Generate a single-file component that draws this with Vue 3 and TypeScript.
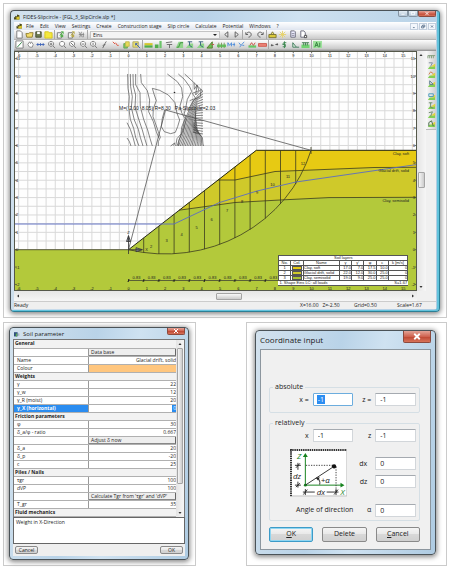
<script setup lang="ts">
interface Shape { d: string; f?: string; s?: string }
type Icon = Shape[]

const G = '#4fae4a'
const page: Icon = [{ d: 'M2 1H6L8 3V9H2Z', f: '#fff', s: '#777' }]
const folder: Icon = [{ d: 'M1 4H4L5 3H9L8 8H2Z', f: '#f3dc6a', s: '#8d7b2c' }]
const disk: Icon = [{ d: 'M2 2H8V8H2Z', f: '#6d7a50', s: '#454c30' }, { d: 'M3.5 2H6.5V4.5H3.5Z', f: '#fff' }]
const folderLit: Icon = [{ d: 'M1 2H5L6 3H9V9H1Z', f: '#f4e83e', s: '#d6c51c' }]
const sheetOut = (c: string): Icon => [{ d: 'M1.5 3H6V9H1.5Z', f: '#f4f4f4', s: '#777' }, { d: 'M4 6L8 2M8 4.500V2H5.500', s: c }, { d: 'M5 5H8V8H5Z', f: c }]
const scissors: Icon = [{ d: 'M2 2L6 8M5 2L3 8M7 3V8M2 5H8', s: '#888' }]
const prev: Icon = [{ d: 'M6.500 2V8L3 5Z', f: '#eee', s: '#555' }]
const next: Icon = [{ d: 'M3.500 2V8L7 5Z', f: '#eee', s: '#555' }]
const undo: Icon = [{ d: 'M3 4C4 1.500 8 2 8 5C8 7 6 8 5 8M2 2.500V5H4.500', s: '#555' }]
const redo: Icon = [{ d: 'M7 4C6 1.500 2 2 2 5C2 7 4 8 5 8M8 2.500V5H5.500', s: '#555' }]
const print: Icon = [{ d: 'M1 5H9V8.500H1Z', f: '#d9c93c', s: '#7a7332' }, { d: 'M3 5L5 2L7 5Z', f: '#ece37a', s: '#7a7332' }]
const spark: Icon = [{ d: 'M5 1V9M1 5H9M2 2L8 8M8 2L2 8', s: '#e6d36a' }]
const copy: Icon = [{ d: 'M2 1H6L7 2V8H2Z', f: '#eef', s: '#667' }, { d: 'M3 4H6M3 6H6', s: '#889' }]
const preview: Icon = [{ d: 'M2 1H5.500L7 3V8H2Z', f: '#fff', s: '#667' }, { d: 'M6 6H8.500V8.500H6Z', f: '#fff', s: '#444' }]

const pen: Icon = [{ d: 'M1 1H9V9H1Z', f: '#fff', s: '#777' }, { d: 'M2.500 8L7.500 2.500', s: '#1f7a36' }]
const hand: Icon = [{ d: 'M2 5L4 2L5 4L6 2L8 5L7 8H4Z', f: '#fff', s: '#888' }]
const scale: Icon = [{ d: 'M0.500 5H9.500M2 3.500V6.500M5 3.500V6.500M8 3.500V6.500', s: '#3c62b8' }]
const lens = (inner: string): Icon => [{ d: 'M4.500 1.500A2.800 2.800 0 1 0 4.510 1.500M6.500 6.500L9 9', f: '#fff', s: '#777' }, { d: inner, s: '#666' }]
const slash: Icon = [{ d: 'M3 9L5.500 4L7 1.500M3 6L6 5', s: '#666' }]
const redArrow: Icon = [{ d: 'M2 2L4.500 4.500M5 3L7 6H8.500', s: '#dd4b34' }]
const layer: Icon = [{ d: 'M2 4H6V9H2Z', f: '#79c35e', s: '#6aa655' }, { d: 'M4 2H8V7H4Z', f: '#e9dd58', s: '#c2b84e' }]
const shot: Icon = [{ d: 'M1 2H7V8H1Z', f: '#e8de70', s: '#b0a860' }, { d: 'M4 4L9 9M6 4H4V6', s: '#3b5fb5' }]
const strata: Icon = [{ d: 'M0.500 3.500H9.500V6H0.500Z', f: '#d2c62a' }, { d: 'M0.500 6H9.500V8.500H0.500Z', f: G }]
const wall: Icon = [{ d: 'M1 5H5V9H1Z', f: G }, { d: 'M6 1H8.500V9H6Z', f: '#6cc46a' }]
const nails: Icon = [{ d: 'M1 3L8 2M2 5H8M5 5V9', s: '#666' }]
const slopeUp: Icon = [{ d: 'M1 9L4 2H9V9Z', f: '#8fd58a' }, { d: 'M2 8H4L6 3H9', s: '#3d8f3a' }]
const slopeMan: Icon = [{ d: 'M1 9L5 4H9V9Z', f: '#8fd58a' }, { d: 'M3 2H8M5 2V6L8 8', s: '#315f7b' }]
const wedge: Icon = [{ d: 'M1 9L7 2V9Z', f: '#6bbf52', s: '#567b2e' }, { d: 'M6 5H9', s: '#b54' }]
const hatch: Icon = [{ d: 'M0 5H10V8H0Z', f: '#5dca5f' }, { d: 'M2 3V9M5 3V9M8 3V9', s: '#7c9b5a' }]
const blueM: Icon = [{ d: 'M1 7V3L3 6L5 3V7M6 5H9M8 3V7', s: '#4e8ddb' }]
const blueY: Icon = [{ d: 'M2 3L4.500 6L8 2M4.500 6L3 8M6 6H8', s: '#4e8ddb' }]
const redUp: Icon = [{ d: 'M0.500 6H9V8.500H0.500Z', f: '#67c766' }, { d: 'M2 6L4 3L6 6L8 3', s: '#c84a3c' }]
const redBar: Icon = [{ d: 'M0.500 4H9.500V7H0.500Z', f: '#ee8578', s: '#cc5548' }]
const link: Icon = [{ d: 'M1 6H4M6 5H9M2 4.500V7M8 3.500V6', s: '#555' }]
const dollar: Icon = [{ d: 'M7 3H4L3 5H6L6 7.500H3M5 1.500V9', s: '#3c8850' }]
const tri: Icon = [{ d: 'M2 8V3L6 8ZM6 8H9', s: '#3c7858', f: '#dff2e2' }]
const load: Icon = [{ d: 'M0.500 5H9.500V9H0.500Z', f: '#71d372' }, { d: 'M1 3H9M3 3V6M5 3V6M7 3V6', s: '#3f7d4d' }]
const ai: Icon = [{ d: 'M0 1H10V9H0Z', f: '#9ee29d' }, { d: 'M2 8L4 2.500L6 8M3 6H5M7.500 3V8', s: '#2c7a35' }]

const fileTools: { name: string; icon: Icon }[][] = [
  [{ name: 'New', icon: page }, { name: 'Open', icon: folder }, { name: 'Save', icon: disk }, { name: 'Project', icon: folderLit }],
  [{ name: 'Import', icon: sheetOut('#55b04c') }, { name: 'Export', icon: sheetOut('#b9a94a') }, { name: 'Cut', icon: scissors }],
]
const editTools: { name: string; icon: Icon }[][] = [
  [{ name: 'Previous', icon: prev }, { name: 'Next', icon: next }],
  [{ name: 'Undo', icon: undo }, { name: 'Redo', icon: redo }],
  [{ name: 'Print', icon: print }, { name: 'Calculate', icon: spark }, { name: 'Copy', icon: copy }, { name: 'Preview', icon: preview }],
]
const drawTools: Icon[][] = [
  [pen, hand, scale, lens('M3 4.500H6M4.500 3V6'), lens(''), lens('M3 3L6 6'), lens('M3 4.500H6'), lens('M4.500 3V6'), slash],
  [redArrow, layer, shot],
  [strata, wall, nails, slopeUp, slopeMan, slopeMan, wedge, hatch, blueM, blueY, redUp, redBar],
  [link, dollar, tri, load],
  [ai],
]
const sideCap: Icon = [{ d: 'M1 4V7M3 4V7M5 4V7M7 4V7M1 4H9', s: '#7f9a76' }]
const side = (mark: string, c: string): Icon => [
  { d: 'M1 9L3 6H7L9 4V9Z', f: '#83cf55' },
  { d: 'M4 6L9 3V6Z', f: '#e4d23c' },
  { d: mark, s: c },
]
const sideTools: Icon[] = [
  sideCap, side('M2 2H6L4 6', '#789'), side('M2 5L4 2L7 4', '#c74'), side('M3 2V6H7Z', '#578'),
  side('M2 2H7V5H2Z', '#49b'), side('M2 2H6M4 2V7L7 8', '#686'), side('M2 3L6 2L4 7', '#686'), side('M2 8V4L5 2L7 8', '#464'),
]
const menus = ['File', 'Edit', 'View', 'Settings', 'Create', 'Construction stage', 'Slip circle', 'Calculate', 'Potential', 'Windows', '?']

/* metres to drawing units */
const px = (x: number) => 129.5 + x * 18.31
const py = (z: number) => 249.7 - z * 17.37
const range = (a: number, b: number, step = 1) =>
  Array.from({ length: Math.round((b - a) / step) + 1 }, (_, i) => a + i * step)
const gridX = range(-6, 15.5, 0.5)
const gridZ = range(0, 11, 0.5)
const labelsX = range(-6, 15)
const labelsZ = range(-2, 11)
const arcY = (x: number) => 110 + 144 * Math.sqrt(1 - ((x - 166.5) / 151.9) ** 2)
const groundY = (x: number) => Math.max(150.3, 249.7 - (x - 129.5) * 0.778)
const slices = range(1, 11).map((i) => 129.5 + i * 15.2)
const ticks = range(0, 9).map((i) => 129.5 + i * 15.2)
const sliceLabels: [number, number, number][] = [
  [2, 152, 246], [3, 167.5, 240], [4, 182.5, 234], [5, 197.500, 227], [6, 212.500, 219], [7, 228, 210],
  [8, 243, 201], [9, 258, 192], [10, 273.500, 184], [11, 289, 176], [12, 304, 163],
]
const dense = range(0, 16).map((i) =>
  `M612 ${124 + i * 8}L${598 - i} ${134 + i * 7}L${582 + i} ${156 + i * 6}L${568 + i * 2} ${186 + i * 4}L${556 + i * 3.4} ${215 + i * 3}L${548 + i * 4} ${250 + i * 2}L${534 + i * 5} 288`)
const contours = [
  'M386 72L387 115L391 140L389 170L394 208L404 235L410 262L420 288',
  'M394 72L395 110L400 140L397 172L406 210L418 238L424 262L432 288',
  'M402 72L403 108L410 135L408 172L420 210L430 240L437 265L444 288',
  'M410 72L410 104L423 128L424 170L434 208L446 240L453 265L460 288',
  'M425 72L427 98L445 122L452 150L449 185L463 215L472 245L480 265',
  'M384 218L394 238L402 262L409 288',
  'M384 264L391 274L396 288',
  'M460 115L466 135L472 152L463 175L462 200L470 222L478 245L484 262L478 275L478 288',
  'M460 115L482 121L508 135L528 158L534 190L542 210L536 230L529 247L515 251L496 245L487 230L490 205L497 180',
  'M505 72L535 95L548 114L551 140L543 168L548 188L558 206L548 232L546 252L534 266L530 288',
  'M538 72L556 88L572 110L578 124L565 148L560 175L556 190L562 208L553 240L540 270L538 288',
  'M557 72L585 98L612 124',
  'M585 98L586 118L594 105L600 122L580 130L590 145L572 152',
  'M594 106L590 135L606 118L604 140L584 150L566 182',
  'M515 288L527 279L524 287',
  ...dense,
]

const layers = [
  { no: 1, col: 'soft', name: 'Clay, soft', v: ['17.0', '7.0', '17.5', '10.0', '0'] },
  { no: 2, col: 'drift', name: 'Glacial drift, solid', v: ['22.0', '12.0', '30.0', '25.0', '0'] },
  { no: 3, col: 'semi', name: 'Clay, semisolid', v: ['19.0', '9.0', '25.0', '25.0', '0'] },
]

interface Row { kind: 'head' | 'button' | 'value' | 'colour'; label?: string; value?: string; active?: boolean }
const rows: Row[] = [
  { kind: 'head', label: 'General' },
  { kind: 'button', value: 'Data base' },
  { kind: 'value', label: 'Name', value: 'Glacial drift, solid' },
  { kind: 'colour', label: 'Colour' },
  { kind: 'head', label: 'Weights' },
  { kind: 'value', label: 'γ', value: '22' },
  { kind: 'value', label: 'γ_w', value: '12' },
  { kind: 'value', label: 'γ_R (moist)', value: '20' },
  { kind: 'value', label: 'γ_X (horizontal)', value: '0', active: true },
  { kind: 'head', label: 'Friction parameters' },
  { kind: 'value', label: 'φ', value: '30' },
  { kind: 'value', label: 'δ_a/φ - ratio', value: '0.667' },
  { kind: 'button', value: 'Adjust δ now' },
  { kind: 'value', label: 'δ_a', value: '20' },
  { kind: 'value', label: 'δ_p', value: '-20' },
  { kind: 'value', label: 'c', value: '25' },
  { kind: 'head', label: 'Piles / Nails' },
  { kind: 'value', label: 'τgr', value: '100' },
  { kind: 'value', label: 'dVP', value: '100' },
  { kind: 'button', value: "Calculate Tgr from 'τgr' and 'dVP'" },
  { kind: 'value', label: 'T_gr', value: '35' },
  { kind: 'head', label: 'Fluid mechanics' },
]
</script>

<template>
  <main class="sheet">
    <section class="card">
      <div class="win app">
        <header class="title">
          <svg class="logo" viewBox="0 0 10 10"><path d="M0 9V5L2 6V3L5 4V1L9 2V9Z" fill="#4b4a1c" /><path d="M4 9V5L9 4V9Z" fill="#d8c52a" /></svg>
          <h1>FIDES-Slipcircle - [FGL_3_SlipCircle.slp *]</h1>
          <div class="caption">
            <button class="cap" aria-label="Minimize"><svg viewBox="0 0 10 6"><path d="M3 4H7" /></svg></button>
            <button class="cap" aria-label="Maximize"><svg viewBox="0 0 10 6"><path d="M3 1.500H7V4.500H3Z" /></svg></button>
            <button class="cap shut" aria-label="Close"><svg viewBox="0 0 10 6"><path d="M3 1L7 5M7 1L3 5" /></svg></button>
          </div>
        </header>
        <nav class="menu">
          <svg class="logo" viewBox="0 0 10 10"><path d="M0 9V5L2 6V3L5 4V1L9 2V9Z" fill="#4b4a1c" /><path d="M3 9V6L9 4V9Z" fill="#d8c52a" /></svg>
          <a v-for="m in menus" :key="m" href="#">{{ m }}</a>
          <div class="mdi">
            <button aria-label="Minimize document"><svg viewBox="0 0 8 7"><path d="M2.500 5H5" /></svg></button>
            <button aria-label="Restore document"><svg viewBox="0 0 8 7"><path d="M2 3H5V5.500H2ZM3.500 3V1.500H6.500V4H5" /></svg></button>
            <button aria-label="Close document"><svg viewBox="0 0 8 7"><path d="M2.500 2L5.500 5M5.500 2L2.500 5" /></svg></button>
          </div>
        </nav>
        <div class="bar files">
          <div v-for="(g, i) in fileTools" :key="i" class="group">
            <button v-for="t in g" :key="t.name" class="tool" :aria-label="t.name">
              <svg viewBox="0 0 10 10"><path v-for="(p, k) in t.icon" :key="k" :d="p.d" :fill="p.f ?? 'none'" :stroke="p.s ?? 'none'" /></svg>
            </button>
          </div>
          <div class="stage">
            <select aria-label="Construction stage"><option>Eins</option></select>
          </div>
          <div v-for="(g, i) in editTools" :key="'e' + i" class="group">
            <button v-for="t in g" :key="t.name" class="tool" :aria-label="t.name">
              <svg viewBox="0 0 10 10"><path v-for="(p, k) in t.icon" :key="k" :d="p.d" :fill="p.f ?? 'none'" :stroke="p.s ?? 'none'" /></svg>
            </button>
          </div>
        </div>
        <div class="bar draws">
          <div v-for="(g, i) in drawTools" :key="i" class="group">
            <button v-for="(icon, j) in g" :key="j" class="tool" :aria-label="`Drawing tool ${i + 1}.${j + 1}`">
              <svg viewBox="0 0 10 10"><path v-for="(p, k) in icon" :key="k" :d="p.d" :fill="p.f ?? 'none'" :stroke="p.s ?? 'none'" /></svg>
            </button>
          </div>
        </div>
        <div class="work">
          <div class="chart">
            <svg class="plot" viewBox="15 51 403 240">
              <rect x="15" y="51" width="403" height="240" fill="#fefefe" />
              <g stroke="#d9d9d9" stroke-width="1">
                <line v-for="x in gridX" :key="'x' + x" :x1="px(x)" :x2="px(x)" y1="51" y2="250" />
                <line v-for="z in gridZ" :key="'z' + z" x1="16" x2="417" :y1="py(z)" :y2="py(z)" />
              </g>
              <path d="M15 249.700H129.500L257.300 150.300H418V291H15Z" fill="#b3c93b" />
              <path d="M180 210.200L219 180L257.300 150.300H418V197.300L330 197.600L281 200L236 202.500Z" fill="#cfc92a" />
              <path d="M219 180L257.300 150.300H418V167.300L375 167.500L276 171.500L236 180Z" fill="#e7ca13" />
              <g fill="none" stroke="#3b3b20" stroke-width="0.800">
                <path d="M15 249.700H129.500" />
                <path d="M129.500 249.700L257.300 150.300H418" stroke="#26261a" stroke-width="1" />
                <path d="M219 180H236L276 171.500L375 167.500L418 167.300" />
                <path d="M180 210.200L236 202.500L281 200L330 197.600L418 197.300" />
                <path d="M129.500 249.700A151.900 144 0 0 0 312 150.300" />
                <path d="M312 147V154" />
                <line v-for="x in slices" :key="x" :x1="x" :x2="x" :y1="groundY(x)" :y2="arcY(x)" />
              </g>
              <path d="M15 224H175L220 202.700L258 191L297 182L418 164.500" fill="none" stroke="#5a6cc4" stroke-width="0.900" />
              <path d="M129.500 249.700L166.500 110L312 150.300" fill="none" stroke="#555" stroke-width="0.800" />
              <g transform="translate(0 50) scale(0.3333)" fill="none" stroke="#4a4a4a" stroke-width="2">
                <path v-for="(c, i) in contours" :key="i" :d="c" />
              </g>
              <circle cx="175.500" cy="92.500" r="0.800" fill="#222" />
              <g stroke="#333" stroke-width="0.800" fill="#8a8f9c">
                <path d="M129.500 254V236M127.500 241.500L129.500 235.500L131.500 241.500Z" />
                <path d="M129.500 249.700H143M137 247.700L143.500 249.700L137 251.700Z" />
              </g>
              <g class="ink mid">
                <text x="129.500" y="233.500">Z</text>
                <text x="147.500" y="251">X</text>
                <text v-for="[n, x, y] in sliceLabels" :key="n" :x="x" :y="y + 1.500">{{ n }}</text>
                <text v-for="x in labelsX" :key="'t' + x" :x="px(x)" y="57">{{ x }}</text>
                <text v-for="x in labelsX" :key="'b' + x" :x="px(x)" y="289.500">{{ x }}</text>
                <text v-for="t in ticks" :key="'d' + t" :x="t + 8" y="279">0.83</text>
              </g>
              <g class="ink">
                <text v-for="z in labelsZ" :key="'l' + z" x="17" :y="py(z) + 1.500">{{ z }}</text>
                <text class="wide" x="120" y="109.500">M=( 2.00&#160; 8.05) R=8.30&#160;&#160; Pa-Slipcircle=2.03</text>
              </g>
              <g class="ink end">
                <text v-for="z in labelsZ" :key="'r' + z" x="416" :y="py(z) + 1.500">{{ z }}</text>
                <text x="410" y="154.500">Clay, soft</text>
                <text x="410" y="171.500">Glacial drift, solid</text>
                <text x="410" y="202">Clay, semisolid</text>
              </g>
              <path d="M129.500 280.500H280" stroke="#333" stroke-width="0.700" />
              <path v-for="t in ticks" :key="t" :d="`M${t - 1} 281.500L${t + 1} 279.500M${t} 279V282`" stroke="#222" stroke-width="0.800" />
              <g stroke="#444" stroke-width="0.700">
                <line v-for="x in labelsX" :key="'k' + x" :x1="px(x)" :x2="px(x)" y1="51" y2="53" />
                <line v-for="x in labelsX" :key="'m' + x" :x1="px(x)" :x2="px(x)" y1="289.500" y2="291" />
                <line v-for="z in labelsZ" :key="'n' + z" x1="15" x2="18" :y1="py(z)" :y2="py(z)" />
                <line v-for="z in labelsZ" :key="'o' + z" x1="415.500" x2="418" :y1="py(z)" :y2="py(z)" />
              </g>
              <rect x="15.500" y="51.500" width="402" height="239" fill="none" stroke="#55584a" />
            </svg>
            <table class="legend">
              <colgroup>
                <col class="c-no"><col class="c-col"><col class="c-name"><col class="c-n"><col class="c-n"><col class="c-n"><col class="c-n"><col class="c-k">
              </colgroup>
              <thead>
                <tr><th colspan="8">Soil layers</th></tr>
                <tr><th>No.</th><th>Col.</th><th>Name</th><th>γ</th><th>γ'</th><th>φ</th><th>c</th><th>k [m/s]</th></tr>
              </thead>
              <tbody>
                <tr v-for="l in layers" :key="l.no">
                  <td class="ctr">{{ l.no }}</td>
                  <td><span class="chip" :class="l.col"></span></td>
                  <td>{{ l.name }}</td>
                  <td v-for="(v, i) in l.v" :key="i" class="num">{{ v }}</td>
                </tr>
              </tbody>
              <tfoot>
                <tr><td class="note" colspan="5">1. Shape Eins LC: all loads</td><td class="note num" colspan="3">S=1.67</td></tr>
              </tfoot>
            </table>
          </div>
          <div class="vscroll">
            <button aria-label="Scroll up"><svg viewBox="0 0 8 8"><path d="M2.500 5L4 3L5.500 5Z" /></svg></button>
            <i class="above"></i><i class="thumb"></i><i class="below"></i>
            <button aria-label="Scroll down"><svg viewBox="0 0 8 8"><path d="M2.500 3L4 5L5.500 3Z" /></svg></button>
          </div>
          <aside class="side">
            <button v-for="(icon, i) in sideTools" :key="i" class="tool" :aria-label="`View ${i + 1}`">
              <svg viewBox="0 0 10 10"><path v-for="(p, k) in icon" :key="k" :d="p.d" :fill="p.f ?? 'none'" :stroke="p.s ?? 'none'" /></svg>
            </button>
          </aside>
          <div class="hscroll">
            <button aria-label="Scroll left"><svg viewBox="0 0 8 8"><path d="M5 2.500L3 4L5 5.500Z" /></svg></button>
            <i class="before"></i><i class="thumb"></i><i class="after"></i>
            <button aria-label="Scroll right"><svg viewBox="0 0 8 8"><path d="M3 2.500L5 4L3 5.500Z" /></svg></button>
          </div>
        </div>
        <footer class="status">
          <span class="ready">Ready</span>
          <span class="pos">X=16.00&#160;&#160; Z=-2.50</span>
          <span class="grid">Grid=0.50</span>
          <span class="scl">Scale=1.67</span>
        </footer>
      </div>
    </section>

    <section class="card">
      <form class="win soil" @submit.prevent>
        <header class="title">
          <svg class="logo" viewBox="0 0 10 10"><path d="M0 2H6V9H0Z" fill="#2f4f7c" /><path d="M3 4H5V9H3Z" fill="#5cb04d" /><path d="M8 4V8" stroke="#777" /></svg>
          <h2>Soil parameter</h2>
          <button type="button" class="cap shut" aria-label="Close"><svg viewBox="0 0 10 6"><path d="M3 1L7 5M7 1L3 5" /></svg></button>
        </header>
        <div class="props">
          <table class="grid-table">
            <tbody>
              <tr v-for="(r, i) in rows" :key="i" :class="[r.kind, { active: r.active }]">
                <th v-if="r.kind === 'head'" colspan="2">{{ r.label }}</th>
                <template v-else>
                  <th class="lab"><label v-if="r.label" :for="`p${i}`">{{ r.label }}</label></th>
                  <td>
                    <button v-if="r.kind === 'button'" type="button" class="flat">{{ r.value }}</button>
                    <button v-else-if="r.kind === 'colour'" :id="`p${i}`" type="button" class="swatch"></button>
                    <input v-else :id="`p${i}`" type="text" :value="r.value">
                  </td>
                </template>
              </tr>
            </tbody>
          </table>
          <div class="vscroll slim">
            <button type="button" aria-label="Scroll up"><svg viewBox="0 0 8 8"><path d="M2.500 5L4 3L5.500 5Z" /></svg></button>
            <i class="thumb"></i><i class="below"></i>
            <button type="button" aria-label="Scroll down"><svg viewBox="0 0 8 8"><path d="M2.500 3L4 5L5.500 3Z" /></svg></button>
          </div>
        </div>
        <p class="hint">Weight in X-Direction</p>
        <div class="actions">
          <button type="button" class="push">Cancel</button>
          <button type="submit" class="push">OK</button>
        </div>
      </form>
    </section>

    <section class="card">
      <form class="win coord" @submit.prevent>
        <header class="title">
          <h2>Coordinate input</h2>
          <button type="button" class="cap shut" aria-label="Close"><svg viewBox="0 0 10 6"><path d="M3.500 1.500L6.500 4.500M6.500 1.500L3.500 4.500" /></svg></button>
        </header>
        <div class="pane">
          <fieldset>
            <legend>absolute</legend>
            <div class="fields">
              <label for="ax">x =</label><input id="ax" class="picked" type="text" value="-1">
              <label for="az">z =</label><input id="az" type="text" value="-1">
            </div>
          </fieldset>
          <fieldset>
            <legend>relatively</legend>
            <div class="fields rel">
              <label for="rx">x</label><input id="rx" type="text" value="-1">
              <label for="rz">z</label><input id="rz" type="text" value="-1">
              <div class="sketch">
                <svg viewBox="0 0 58 48">
                  <rect width="58" height="48" fill="#fff" />
                  <path d="M0 1H58M1 0V48" fill="none" stroke="#333" stroke-width="2" stroke-dasharray="1.500 0.700" />
                  <path d="M57.500 2V47.500H2" fill="none" stroke="#bbb" />
                  <g stroke="#17831f" fill="#17831f">
                    <path d="M15.500 37V7M15.500 36.500H52" fill="none" />
                    <path d="M13 8L15.500 4L18 8ZM51 34L55 36.500L51 39Z" stroke="none" />
                    <circle cx="15.500" cy="36.500" r="1.500" stroke="none" />
                  </g>
                  <path d="M16 16.500H45M46.500 18V43" fill="none" stroke="#444" stroke-dasharray="1.300 1.300" />
                  <path d="M15.500 36.500L43 18.500M27.500 29C30 31 30.500 33 30 36" fill="none" stroke="#222" stroke-width="0.900" />
                  <path d="M26 29L30 28.500L28.500 32Z" fill="#222" />
                  <circle cx="44.500" cy="17.500" r="2.200" fill="#111" />
                  <g fill="none" stroke="#222" stroke-width="0.900">
                    <path d="M8 14V21M8 33V39M5 16.500H11M6 19L10 14.500M5 36.500H11M6 38.500L10 34.500" />
                    <path d="M13 43.500H25M37 43.500H49M15.500 40.500V46.500M13.500 46L17.500 41M46.500 40.500V46.500M44.500 46L48.500 41" />
                  </g>
                  <g class="hand">
                    <text x="7" y="10" class="green">Z</text>
                    <text x="3" y="30">dz</text>
                    <text x="31" y="34">+α</text>
                    <text x="27" y="46">dx</text>
                    <text x="51" y="46" class="green">X</text>
                  </g>
                </svg>
              </div>
              <div class="deltas">
                <label for="dx">dx</label><input id="dx" type="text" value="0">
                <label for="dz">dz</label><input id="dz" type="text" value="0">
              </div>
              <label class="angle" for="al">Angle of direction</label>
              <label for="al">α</label><input id="al" type="text" value="0">
            </div>
          </fieldset>
          <div class="buttons">
            <button type="submit" class="push main"><u>O</u>K</button>
            <button type="button" class="push">Delete</button>
            <button type="button" class="push"><u>C</u>ancel</button>
          </div>
        </div>
      </form>
    </section>
  </main>
</template>

<style>
body { background: #fff; }
</style>

<style scoped>
* { box-sizing: border-box; }
.sheet {
  display: grid;
  grid-template-columns: 193fr 201fr;
  column-gap: 50px;
  row-gap: 4px;
  padding: 3px 4px 3px 3px;
  font-family: "Open Sans", "Noto Sans", sans-serif;
  font-size: 5px;
  line-height: 8px;
  color: #222;
}
.card { border: 1px solid #cbcbcb; background: #fff; }
.card:first-child { grid-column: 1 / -1; padding: 6px 6px 5px; }
.card:nth-child(2) { padding: 4px 6px 5px 5px; }
.card:nth-child(3) { padding: 7px 10px 10px 8px; }
h1, h2, p { margin: 0; font-size: inherit; font-weight: 400; }
button, input, select { font: inherit; color: inherit; margin: 0; padding: 0; border: 0; background: none; }
svg { display: block; }
a { color: inherit; text-decoration: none; }

.win {
  border: 1px solid #4b5358;
  border-radius: 4px;
  background: linear-gradient(100deg, #d3e2ee, #b9d3e8 40%, #cfe2f1 60%, #aecbe2);
  box-shadow: 0 1px 5px 1px #888;
  padding: 0 3px 3px;
}
.app { padding-bottom: 2px; border-right-color: #2c7f96; border-bottom-color: #2c7f96; box-shadow: inset -2px -1px 0 #62c3dc, 0 1px 5px 1px #888; }
.title { display: flex; align-items: center; height: 11px; gap: 3px; }
.logo { width: 6px; height: 6px; }
.title h1, .title h2 { flex: 1; }
.caption { display: flex; align-self: flex-start; }
.cap { width: 10px; height: 6px; border: 1px solid #8594a2; border-top: 0; border-radius: 0 0 2px 2px; background: linear-gradient(#e4edf5, #b4c6d6); }
.cap svg { width: 100%; height: 100%; }
.cap path { fill: none; stroke: #fff; stroke-width: 1; }
.cap.shut { width: 18px; border-color: #8c4a3e; background: linear-gradient(#e3a396, #cf6350 50%, #bd4632 52%, #d7735a); }

.menu { display: flex; align-items: center; gap: 6px; height: 8px; padding: 0 0 0 2px; background: linear-gradient(#fff, #dfe5ef); }
.menu .logo { width: 7px; margin-right: -3px; }
.mdi { display: flex; margin-left: auto; gap: 1px; }
.mdi button { width: 8px; height: 7px; border: 1px solid #c3cfdd; background: #f3f7fc; }
.mdi svg { width: 100%; height: 100%; }
.mdi path { fill: none; stroke: #46607e; stroke-width: 1; }
.bar { height: 10px; background: linear-gradient(#fdfdfd, #c9c9c9); border-bottom: 1px solid #b5b5b5; align-items: center; }
.group { display: flex; justify-content: space-between; padding: 0 1px; border-right: 1px solid #a8a8a8; }
.group:last-child { border-right: 0; }
.tool { width: 9px; height: 9px; }
.tool svg { width: 100%; height: 100%; }
.files { display: grid; grid-template-columns: 41px 33px 133px 22px 24px 42px; }
.draws { display: grid; grid-template-columns: 96px 33px 126px 43px 14px; }
.draws .group:first-child { border-right: 0; }
.stage { position: relative; margin: 0 1px 0 2px; height: 8px; }
.stage select { display: block; appearance: none; width: 100%; height: 8px; padding-left: 2px; background: #f4f4f4; border: 1px solid #c4c4c4; border-radius: 0; line-height: 6px; }
.stage::after { content: ""; position: absolute; right: 3px; top: 3px; border: 2px solid transparent; border-top-color: #222; border-bottom: 0; }

.work { display: grid; grid-template-columns: 1fr 9px 10px; background: #f0f0f0; border-top: 1px solid #999; }
.chart { position: relative; }
.plot { width: 100%; height: auto; }
.ink { font: 4px "Liberation Sans", Arial, sans-serif; fill: #222; }
.ink .wide { font-size: 5px; }
.mid { text-anchor: middle; }
.end { text-anchor: end; }
.legend {
  position: absolute;
  right: 2.2%;
  bottom: 2%;
  width: 32.2%;
  table-layout: fixed;
  border-collapse: collapse;
  background: #fff;
  font: 4px/4px "Liberation Sans", Arial, sans-serif;
  color: #222;
}
.legend th, .legend td { height: 5px; padding: 0; border: 1px solid #555; font-weight: 400; white-space: nowrap; text-align: left; }
.legend th, .legend .ctr { text-align: center; }
.legend .num { text-align: right; }
.legend .note { border-left-color: transparent; border-right-color: transparent; }
.c-no { width: 9%; }
.c-col { width: 10%; }
.c-name { width: 28%; }
.c-n { width: 9.5%; }
.c-k { width: 15%; }
.chip { display: block; height: 4px; margin: 0 1px; border: 1px solid #555; }
.soft { background: #e7ca13; }
.drift { background: #cfc92a; }
.semi { background: #a9c032; }

.vscroll { display: flex; flex-direction: column; background: linear-gradient(90deg, #e4e4e4, #f6f6f6); }
.vscroll button, .hscroll button { width: 8px; height: 8px; flex: none; }
.vscroll svg, .hscroll svg { width: 100%; height: 100%; }
.vscroll path, .hscroll path { fill: #333; }
.vscroll .thumb { height: 16px; margin: 0 1px; border: 1px solid #a5a5a5; border-radius: 1px; background: linear-gradient(90deg, #f6f6f6, #ccc); }
.above { flex: 113; }
.below { flex: 95; }
.slim .thumb { flex: 136; }
.slim .below { flex: 25; }
.side { align-self: start; display: grid; justify-items: center; background: linear-gradient(90deg, #fafafa, #cfcfcf); padding: 1px 0; border-bottom: 1px solid #bbb; }
.side .tool:nth-child(4) { margin-bottom: 4px; }
.hscroll { grid-column: 1 / 2; display: flex; align-items: center; height: 10px; background: linear-gradient(#e6e6e6, #f6f6f6); }
.hscroll .thumb { width: 26px; height: 7px; border: 1px solid #a5a5a5; border-radius: 1px; background: linear-gradient(#f8f8f8, #ccc); }
.before { flex: 193; }
.after { flex: 167; }
.status { display: flex; height: 8px; line-height: 7px; background: #efefef; border-top: 1px solid #ccc; }
.ready { flex: 1; }
.pos { width: 54px; }
.grid { width: 43px; }
.scl { width: 39px; }

.soil .title { padding-left: 1px; }
.soil .shut { height: 7px; width: 18px; align-self: flex-start; }
.soil h2 { font-size: 6px; }
.props { display: flex; background: #fff; border: 1px solid #777; border-bottom: 0; }
.grid-table { flex: 1; table-layout: fixed; border-collapse: collapse; }
.grid-table tr { height: 8px; }
.grid-table th, .grid-table td { height: 8px; padding: 0; line-height: 7px; border-bottom: 1px solid #b0b0b0; text-align: left; font-weight: 400; }
.grid-table .head th { font-weight: 700; background: #f2f2f2; padding-left: 1px; }
.grid-table .lab { width: 46%; padding-left: 3px; border-right: 1px solid #999; }
.grid-table label { display: block; }
.grid-table input { display: block; width: 100%; height: 7px; text-align: right; }
.grid-table .active .lab { background: #2a8cf0; color: #fff; font-weight: 700; }
.grid-table .active input { width: 4px; margin-left: auto; background: #2a8cf0; color: #fff; }
.flat { display: block; width: 100%; height: 7px; padding-left: 2px; text-align: left; line-height: 6px; background: #eee; border-right: 1px solid #666; border-bottom: 1px solid #888; }
.swatch { display: block; width: 100%; height: 7px; background: #ffc67e; }
.hint { height: 27px; padding-left: 2px; background: #fff; border: 1px solid #666; }
.actions { display: flex; justify-content: space-between; padding: 2px; background: #efefef; }
.push { border: 1px solid #8a8a8a; border-radius: 2px; background: linear-gradient(#f5f5f5, #e8e8e8 48%, #d8d8d8 50%, #d0d0d0); }
.actions .push { width: 23px; height: 8px; line-height: 6px; }

.coord { font-size: 7px; padding: 0 4px 4px; }
.coord .title { height: 18px; }
.coord h2 { font-size: 8px; }
.coord .shut { width: 28px; height: 12px; align-self: flex-start; }
.pane { display: flex; flex-direction: column; gap: 6px; padding: 33px 10px 7px 8px; background: #f0f0f0; border: 1px solid #8c969e; }
fieldset { margin: 0; padding: 0; min-width: 0; border: 1px solid #d5dfe5; border-radius: 2px; }
legend { margin-left: 3px; padding: 0 2px; line-height: 8px; }
.fields { display: grid; grid-template-columns: 43fr 41fr 22fr 41fr; align-items: center; padding: 2px 3px 6px 0; }
.fields label { text-align: right; padding-right: 4px; line-height: 12px; white-space: nowrap; }
.fields input { width: 100%; height: 13px; padding-left: 4px; border: 1px solid #d2d6da; border-top-color: #a5aab0; border-radius: 1px; background: #fff; }
.fields .picked { border-color: #6cadde; color: #fff; background: linear-gradient(#2b8df2, #2b8df2) 3px 1px / 8px 9px no-repeat, #fff; }
.rel { row-gap: 7px; padding-bottom: 3px; }
.sketch { grid-column: 1 / 3; padding-left: 20px; padding-right: 6px; }
.sketch svg { width: 100%; height: auto; }
.hand { font: italic 8px "Open Sans", sans-serif; fill: #222; }
.hand .green { fill: #17831f; }
.deltas { grid-column: 3 / 5; display: grid; grid-template-columns: 22fr 41fr; row-gap: 5px; align-items: center; }
.deltas label { padding-right: 8px; }
.fields .angle { grid-column: 1 / 3; padding-right: 0; }
.buttons { display: grid; grid-template-columns: repeat(3, 1fr); gap: 9px; }
.buttons .push { height: 15px; line-height: 12px; }
.main { border-color: #3c9bc8; box-shadow: inset 0 0 0 1px #8fd6f2; }
</style>
